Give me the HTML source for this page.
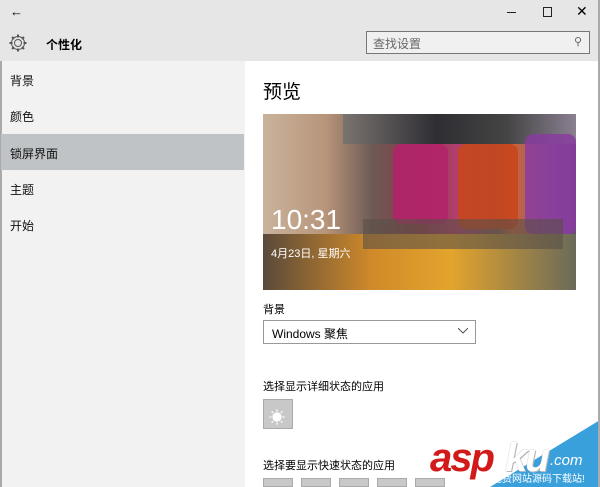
<!DOCTYPE html>
<html><head><meta charset="utf-8"><style>
*{margin:0;padding:0;box-sizing:border-box}
body{width:600px;height:487px;overflow:hidden;position:relative;background:#fff;font-family:"Liberation Sans","Noto Sans CJK SC",sans-serif;color:#000}
.a{position:absolute}
.nav div{position:absolute;left:10px;font-size:12px;color:#111}
</style></head><body>
<div class="a" style="left:0;top:0;width:600px;height:61px;background:#e6e6e6"></div>
<div class="a" style="left:10px;top:4px;font-size:13px">←</div>
<div class="a" style="left:507px;top:12px;width:9px;height:1px;background:#222"></div>
<div class="a" style="left:543px;top:7px;width:9px;height:10px;border:1px solid #222"></div>
<div class="a" style="left:576px;top:3px;font-size:14px">✕</div>
<svg class="a" style="left:8px;top:33px" width="20" height="20" viewBox="0 0 20 20"><circle cx="10" cy="10" r="3.5" fill="none" stroke="#555"/><path d="M10 1.5v3M10 15.5v3M1.5 10h3M15.5 10h3M4 4l2 2M14 14l2 2M16 4l-2 2M6 14l-2 2" stroke="#555" stroke-width="2"/><circle cx="10" cy="10" r="6.5" fill="none" stroke="#555"/></svg>
<div class="a" style="left:46px;top:36px;font-size:12px;font-weight:bold">个性化</div>
<div class="a" style="left:366px;top:31px;width:224px;height:23px;border:1px solid #777;background:#f0f0f0"></div>
<div class="a" style="left:373px;top:35px;font-size:12px;color:#666">查找设置</div>
<div class="a" style="left:574px;top:35px;font-size:11px;color:#666">⚲</div>
<div class="a" style="left:0;top:61px;width:245px;height:426px;background:#f2f2f2;border-left:2px solid #aaa"></div>
<div class="a" style="left:1px;top:134px;width:243px;height:36px;background:#bfc3c6"></div>
<div class="nav">
<div style="top:72px">背景</div>
<div style="top:108px">颜色</div>
<div style="top:145px">锁屏界面</div>
<div style="top:181px">主题</div>
<div style="top:217px">开始</div>
</div>
<div class="a" style="left:263px;top:77px;font-size:19px">预览</div>
<div class="a" style="left:263px;top:114px;width:313px;height:176px;overflow:hidden;background:linear-gradient(90deg,#c9b39c 0%,#b8957a 20%,#6d5a55 35%,#8a3a4a 50%,#b33e6e 62%,#7c5a50 75%,#c8643a 80%,#8a5a8a 92%,#6a4a7a 100%)">
<div class="a" style="left:0;top:120px;width:313px;height:56px;background:linear-gradient(90deg,#5a4a3a,#d08a2a 35%,#e3a42c 60%,#6a6a5a)"></div>
<div class="a" style="left:80px;top:0;width:233px;height:30px;background:linear-gradient(90deg,#7a7470,#2e2e33 40%,#444 70%,#8a8090)"></div>
<div class="a" style="left:130px;top:30px;width:55px;height:80px;background:#b2246a;border-radius:8px;opacity:.9"></div>
<div class="a" style="left:195px;top:30px;width:60px;height:85px;background:#c8461e;border-radius:8px;opacity:.9"></div>
<div class="a" style="left:262px;top:20px;width:51px;height:100px;background:#8a3aa0;border-radius:8px;opacity:.8"></div>
<div class="a" style="left:100px;top:105px;width:200px;height:30px;background:#5a5048;opacity:.6"></div>
<div class="a" style="left:8px;top:90px;font-size:28px;color:#fff;font-weight:300">10:31</div>
<div class="a" style="left:8px;top:131px;font-size:11px;color:#fff">4月23日, 星期六</div>
</div>
<div class="a" style="left:263px;top:301px;font-size:11px">背景</div>
<div class="a" style="left:263px;top:320px;width:213px;height:24px;border:1px solid #999"></div>
<div class="a" style="left:272px;top:325px;font-size:12px">Windows 聚焦</div>
<svg class="a" style="left:458px;top:328px" width="10" height="6"><path d="M0 0l5 5l5-5" fill="none" stroke="#555"/></svg>
<div class="a" style="left:263px;top:378px;font-size:11px">选择显示详细状态的应用</div>
<div class="a" style="left:263px;top:399px;width:30px;height:30px;background:#c8c8c8;border:1px solid #aaa"></div>
<div class="a" style="left:269px;top:404px;font-size:16px;color:#fff">☀</div>
<div class="a" style="left:263px;top:457px;font-size:11px">选择要显示快速状态的应用</div>
<div class="a" style="left:263px;top:478px;width:30px;height:9px;background:#c8c8c8;border:1px solid #aaa"></div>
<div class="a" style="left:301px;top:478px;width:30px;height:9px;background:#c8c8c8;border:1px solid #aaa"></div>
<div class="a" style="left:339px;top:478px;width:30px;height:9px;background:#c8c8c8;border:1px solid #aaa"></div>
<div class="a" style="left:377px;top:478px;width:30px;height:9px;background:#c8c8c8;border:1px solid #aaa"></div>
<div class="a" style="left:415px;top:478px;width:30px;height:9px;background:#c8c8c8;border:1px solid #aaa"></div>
<svg class="a" style="left:470px;top:420px" width="130" height="67"><polygon points="130,0 130,67 20,67" fill="#3aa0dc"/></svg>
<div class="a" style="left:430px;top:438px;font-size:40px;font-weight:bold;font-style:italic;color:#d21a1a;letter-spacing:-2px;line-height:40px">asp</div>
<div class="a" style="left:505px;top:438px;font-size:40px;font-weight:bold;font-style:italic;color:#fff;letter-spacing:-2px;line-height:40px;text-shadow:0 0 1px #999,1px 1px 0 #bbb">ku</div>
<div class="a" style="left:550px;top:452px;font-size:15px;color:#fff;font-style:italic">.com</div>
<div class="a" style="left:492px;top:470px;font-size:10px;color:#fff">免费网站源码下载站!</div>
<div class="a" style="left:598px;top:0;width:2px;height:487px;background:#aaa"></div>
</body></html>
